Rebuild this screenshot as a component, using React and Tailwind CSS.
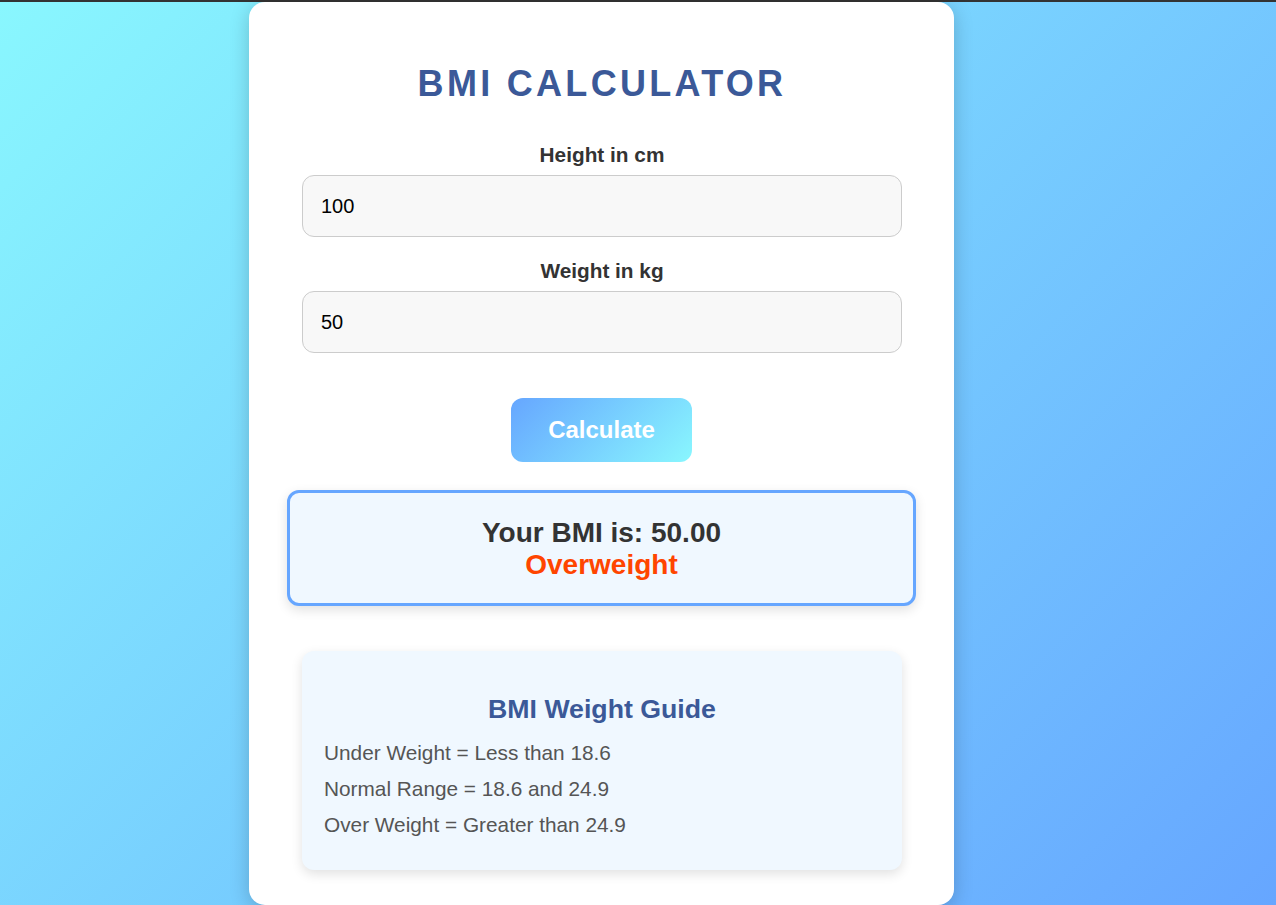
export default function App() {
  return (
    <div className="min-h-screen bg-[linear-gradient(135deg,#89f7fe,#66a6ff)] font-['Liberation_Sans',Arial,sans-serif]">
      <div className="h-[2px] bg-[#333]" />
      <div className="ml-[249px] w-[705px] bg-white rounded-[16px] shadow-[0_4px_20px_rgba(0,0,0,0.2)] pl-[53px] pr-[52px] pt-[62px] pb-[35px] flex flex-col">
        <h1 className="text-center text-[36px] leading-[40px] font-bold tracking-[3.3px] text-[#3b5998]">
          BMI CALCULATOR
        </h1>
        <label className="mt-[39px] text-center text-[20.8px] leading-[24px] font-bold text-[#333]">
          Height in cm
        </label>
        <input
          type="text"
          defaultValue="100"
          className="mt-[8px] h-[62px] w-full rounded-[12px] border border-[#ccc] bg-[#f8f8f8] px-[18px] text-[20px] text-black outline-none"
        />
        <label className="mt-[22px] text-center text-[20.8px] leading-[24px] font-bold text-[#333]">
          Weight in kg
        </label>
        <input
          type="text"
          defaultValue="50"
          className="mt-[8px] h-[62px] w-full rounded-[12px] border border-[#ccc] bg-[#f8f8f8] px-[18px] text-[20px] text-black outline-none"
        />
        <button className="mt-[45px] self-start ml-[209px] h-[64px] w-[181px] rounded-[12px] bg-[linear-gradient(135deg,#66a6ff,#89f7fe)] text-[24px] font-bold text-white">
          Calculate
        </button>
        <div className="mt-[28px] -ml-[15px] -mr-[14px] rounded-[12px] border-[3px] border-[#66a6ff] bg-[#f0f8ff] pt-[24px] pb-[22px] text-center shadow-[0_4px_12px_rgba(0,0,0,0.12)]">
          <div className="text-[28px] leading-[32px] font-bold text-[#333]">Your BMI is: 50.00</div>
          <div className="text-[28px] leading-[32px] font-bold text-[#ff4500]">Overweight</div>
        </div>
        <div className="mt-[45px] rounded-[12px] bg-[#f0f8ff] px-[22px] pt-[42px] pb-[27px] shadow-[0_4px_12px_rgba(0,0,0,0.12)]">
          <h2 className="text-center text-[26.7px] leading-[32px] font-bold text-[#3b5998]">BMI Weight Guide</h2>
          <div className="mt-[10px] text-[20.8px] leading-[36px] text-[#555]">
            <p>Under Weight = Less than 18.6</p>
            <p>Normal Range = 18.6 and 24.9</p>
            <p>Over Weight = Greater than 24.9</p>
          </div>
        </div>
      </div>
    </div>
  );
}
